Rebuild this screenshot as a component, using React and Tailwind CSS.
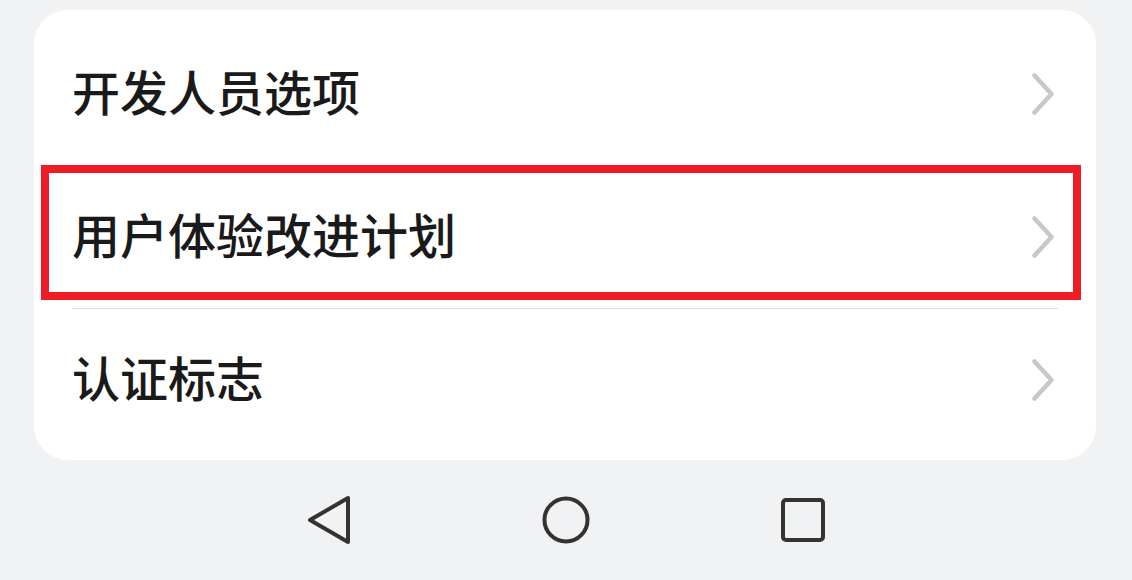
import React from "react";

const rows = ["开发人员选项", "用户体验改进计划", "认证标志"];

const Chevron = () => (
  <svg width="22" height="42" viewBox="0 0 22 42" fill="none" className="shrink-0">
    <path d="M2.5 2.5 L19.5 21 L2.5 39.5" stroke="#c8c8c8" strokeWidth="4.5" strokeLinecap="round" strokeLinejoin="round" />
  </svg>
);

const Row = ({ label }) => (
  <div className="flex h-[142px] items-center justify-between pl-[38px] pr-[42px]">
    <span className="mb-[8px] text-[48px] font-medium leading-none text-[#1a1a1a]">{label}</span>
    <Chevron />
  </div>
);

const Divider = () => <div className="mx-[38px] h-px bg-[#dcdcdc]" />;

export default function App() {
  return (
    <div
      className="flex h-[580px] w-[1132px] flex-col bg-[#f1f2f4]"
      style={{ fontFamily: '"Noto Sans CJK SC", "Noto Sans", sans-serif' }}
    >
      <div className="relative ml-[34px] mt-[10px] h-[450px] w-[1062px] rounded-[34px] bg-white pt-[13px]">
        <Row label={rows[0]} />
        <Divider />
        <Row label={rows[1]} />
        <Divider />
        <Row label={rows[2]} />
        {/* red highlight annotation */}
        <div className="absolute left-[7px] top-[155px] h-[135px] w-[1040px] border-[8px] border-[#ee1c25]" />
      </div>

      <div className="flex flex-1 items-center justify-center gap-[190px] pb-[1px]">
        <svg width="46" height="50" viewBox="0 0 46 50" fill="none">
          <path d="M4 25 L42 3 L42 47 Z" stroke="#333333" strokeWidth="4" strokeLinejoin="round" />
        </svg>
        <svg width="48" height="48" viewBox="0 0 48 48" fill="none">
          <circle cx="24" cy="24" r="21.5" stroke="#333333" strokeWidth="4" />
        </svg>
        <svg width="46" height="46" viewBox="0 0 46 46" fill="none">
          <rect x="3" y="3" width="40" height="40" rx="3" stroke="#333333" strokeWidth="4" />
        </svg>
      </div>
    </div>
  );
}
